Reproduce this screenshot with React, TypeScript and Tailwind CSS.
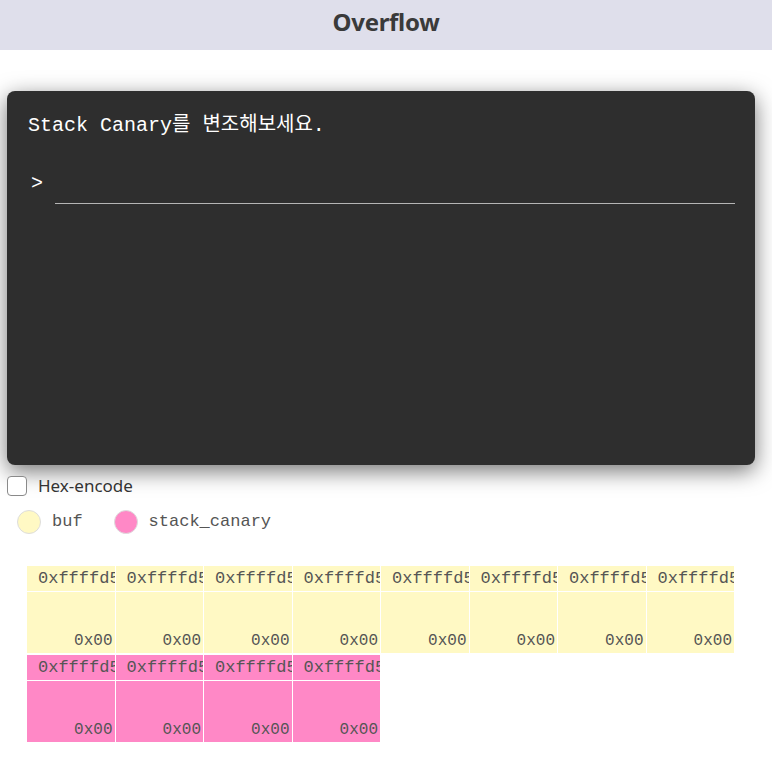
import React from 'react';

const mono = "font-['Liberation_Mono','Courier_New','Noto_Sans_CJK_KR',monospace]";

interface Cell {
  addr: string;
  value: string;
}

const bufCells: Cell[] = Array.from({ length: 8 }, (_, i) => ({
  addr: `0xffffd5${(0x40 + i).toString(16)}`,
  value: '0x00',
}));

const canaryCells: Cell[] = Array.from({ length: 4 }, (_, i) => ({
  addr: `0xffffd5${(0x48 + i).toString(16)}`,
  value: '0x00',
}));

const MemCell: React.FC<{ cell: Cell; pink?: boolean }> = ({ cell, pink }) => (
  <div className={`flex flex-col h-[87px] overflow-hidden ${pink ? 'bg-[#ff88c6]' : 'bg-[#fff9c4]'}`}>
    <div className={`h-[26px] pl-[11px] border-b border-white whitespace-nowrap overflow-hidden text-[17px] leading-[26px] text-[#555] ${mono}`}>
      {cell.addr}
    </div>
    <div className={`flex-1 flex items-end justify-end pr-[2px] pb-[1px] text-[16px] leading-[22px] text-[#555] ${mono}`}>
      {cell.value}
    </div>
  </div>
);

const App: React.FC = () => {
  return (
    <div className="min-h-screen bg-white font-['Noto_Sans',sans-serif]">
      <header className="h-[50px] bg-[#dfdfeb] flex items-center justify-center pb-[6px]">
        <h1 className="text-[24px] font-bold tracking-[-0.3px] text-[#3a3a3a]">Overflow</h1>
      </header>

      <div className="px-[7px] pt-[41px]">
        <div className="w-[748px] h-[374px] rounded-[8px] bg-[#2e2e2e] shadow-[0_6px_22px_rgba(0,0,0,0.55)] pl-[21px] pr-[20px] pt-[23px]">
          <p className={`text-[20px] leading-[24px] text-white ${mono}`}>Stack Canary를 변조해보세요.</p>
          <div className="mt-[26px] flex items-center h-[40px]">
            <span className={`w-[27px] pl-[3px] text-[20px] leading-[24px] text-white ${mono}`}>&gt;</span>
            <div className="flex-1 h-full border-b border-[#b5b5b5]" />
          </div>
        </div>

        <label className="mt-[10px] flex items-center h-[22px]">
          <span className="w-[20px] h-[20px] rounded-[4px] border border-[#8a8a8a] bg-white" />
          <span className="ml-[11px] text-[17px] text-[#333]">Hex-encode</span>
        </label>

        <div className="mt-[13px] ml-[10px] flex items-center h-[24px]">
          <span className="w-[24px] h-[24px] rounded-full bg-[#fff9c4] border border-[#ddd]" />
          <span className={`ml-[11px] text-[17px] text-[#555] ${mono}`}>buf</span>
          <span className="ml-[31px] w-[24px] h-[24px] rounded-full bg-[#ff88c6] border border-[#ddd]" />
          <span className={`ml-[11px] text-[17px] text-[#555] ${mono}`}>stack_canary</span>
        </div>

        <div className="mt-[32px] ml-[20px] w-[707px] grid grid-cols-8 gap-x-px gap-y-[2px]">
          {bufCells.map((c) => (
            <MemCell key={c.addr} cell={c} />
          ))}
          {canaryCells.map((c) => (
            <MemCell key={c.addr} cell={c} pink />
          ))}
        </div>
      </div>
    </div>
  );
};

export default App;
